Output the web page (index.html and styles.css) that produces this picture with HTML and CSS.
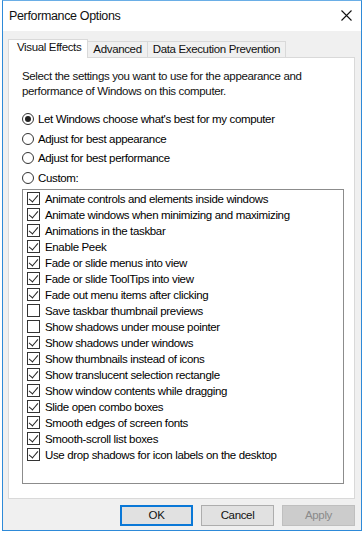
FILE: index.html
```html
<!DOCTYPE html>
<html>
<head lang="en">
    <meta charset="UTF-8">
    <title>Performance Options</title>
    <link rel="stylesheet" href="styles.css">
</head>
<body>
    <div class="window">
        <div class="titlebar">
            <span class="title">Performance Options</span>
            <svg class="close" width="11" height="11" viewBox="0 0 11 11">
                <path d="M0.5 0.5 L10.5 10.5 M10.5 0.5 L0.5 10.5" stroke="#111" stroke-width="1.1" fill="none"/>
            </svg>
        </div>

        <div class="content">
            <ul class="tabs">
                <li class="tab selected">Visual Effects</li>
                <li class="tab">Advanced</li>
                <li class="tab">Data Execution Prevention</li>
            </ul>

            <div class="panel">
                <p class="intro">Select the settings you want to use for the appearance and performance of Windows on this computer.</p>

                <ul class="radios">
                    <li><span class="radio checked"></span>Let Windows choose what's best for my computer</li>
                    <li><span class="radio"></span>Adjust for best appearance</li>
                    <li><span class="radio"></span>Adjust for best performance</li>
                    <li><span class="radio"></span>Custom:</li>
                </ul>

                <ul class="listbox">
                    <li><span class="check on"></span>Animate controls and elements inside windows</li>
                    <li><span class="check on"></span>Animate windows when minimizing and maximizing</li>
                    <li><span class="check on"></span>Animations in the taskbar</li>
                    <li><span class="check on"></span>Enable Peek</li>
                    <li><span class="check on"></span>Fade or slide menus into view</li>
                    <li><span class="check on"></span>Fade or slide ToolTips into view</li>
                    <li><span class="check on"></span>Fade out menu items after clicking</li>
                    <li><span class="check"></span>Save taskbar thumbnail previews</li>
                    <li><span class="check"></span>Show shadows under mouse pointer</li>
                    <li><span class="check on"></span>Show shadows under windows</li>
                    <li><span class="check on"></span>Show thumbnails instead of icons</li>
                    <li><span class="check on"></span>Show translucent selection rectangle</li>
                    <li><span class="check on"></span>Show window contents while dragging</li>
                    <li><span class="check on"></span>Slide open combo boxes</li>
                    <li><span class="check on"></span>Smooth edges of screen fonts</li>
                    <li><span class="check on"></span>Smooth-scroll list boxes</li>
                    <li><span class="check on"></span>Use drop shadows for icon labels on the desktop</li>
                </ul>
            </div>

            <div class="buttons">
                <div class="btn default">OK</div>
                <div class="btn">Cancel</div>
                <div class="btn disabled">Apply</div>
            </div>
        </div>
    </div>
</body>
</html>
```

FILE: styles.css
```css
*{
    margin: 0;
    padding: 0;
    box-sizing: border-box;
}
li{
    list-style: none;
}
body{
    background: #fff;
    font-family: "Liberation Sans", Arial, sans-serif;
    font-size: 11.5px;
    letter-spacing: -0.35px;
    color: #000;
}
.window{
    width: 360px;
    height: 531px;
    margin-left: 2px;
    border: 1px solid #2e8ad8;
    border-top-color: #6aaee6;
    background: #f0f0f0;
}
.titlebar{
    height: 30px;
    background: #fff;
    display: flex;
    align-items: center;
    justify-content: space-between;
    padding: 0 8px 1px 6px;
}
.title{
    font-size: 12.5px;
    color: #111;
}
.close{
    margin-right: 1px;
}
.content{
    padding: 8px 6px 0 5px;
}
/*标签页*/
.tabs{
    display: flex;
    align-items: flex-end;
    height: 18px;
}
.tab{
    height: 16px;
    line-height: 14px;
    padding: 0 5px;
    border: 1px solid #d9d9d9;
    border-bottom: none;
    border-left: none;
    background: #f0f0f0;
    color: #111;
}
.tab.selected{
    height: 19px;
    margin-bottom: -1px;
    line-height: 15px;
    padding: 0 6px 0 8px;
    background: #fff;
    border-left: 1px solid #d9d9d9;
    position: relative;
    z-index: 1;
}
.panel{
    height: 442px;
    background: #fff;
    border: 1px solid #d9d9d9;
    padding: 11px 10px 0 13px;
}
.intro{
    line-height: 15px;
    color: #111;
    width: 310px;
}
.radios{
    margin-top: 10px;
}
.radios li{
    height: 19.7px;
    display: flex;
    align-items: center;
}
.radio{
    width: 12px;
    height: 12px;
    border: 1px solid #333;
    border-radius: 50%;
    margin-right: 4px;
    display: flex;
    align-items: center;
    justify-content: center;
}
.radio.checked::after{
    content: "";
    width: 6px;
    height: 6px;
    border-radius: 50%;
    background: #222;
}
.listbox{
    margin-top: 1px;
    height: 295px;
    border: 1px solid #8c8c8c;
    padding: 1px 4px 0 4px;
}
.listbox li{
    height: 16px;
    display: flex;
    align-items: center;
    white-space: nowrap;
}
.check{
    width: 13px;
    height: 13px;
    border: 1px solid #333;
    margin-right: 5px;
    flex-shrink: 0;
    position: relative;
}
.check.on::after{
    content: "";
    position: absolute;
    left: 3px;
    top: 0px;
    width: 4px;
    height: 8px;
    border-right: 1px solid #222;
    border-bottom: 1px solid #222;
    transform: rotate(40deg);
}
.buttons{
    display: flex;
    justify-content: flex-end;
    gap: 8px;
    margin-top: 6px;
}
.btn{
    width: 73px;
    height: 21px;
    background: #e1e1e1;
    border: 1px solid #adadad;
    text-align: center;
    line-height: 19px;
    color: #111;
}
.btn.default{
    border: 2px solid #0a78d7;
    line-height: 17px;
}
.btn.disabled{
    background: #cccccc;
    border-color: #bfbfbf;
    color: #8a8a8a;
}
```
